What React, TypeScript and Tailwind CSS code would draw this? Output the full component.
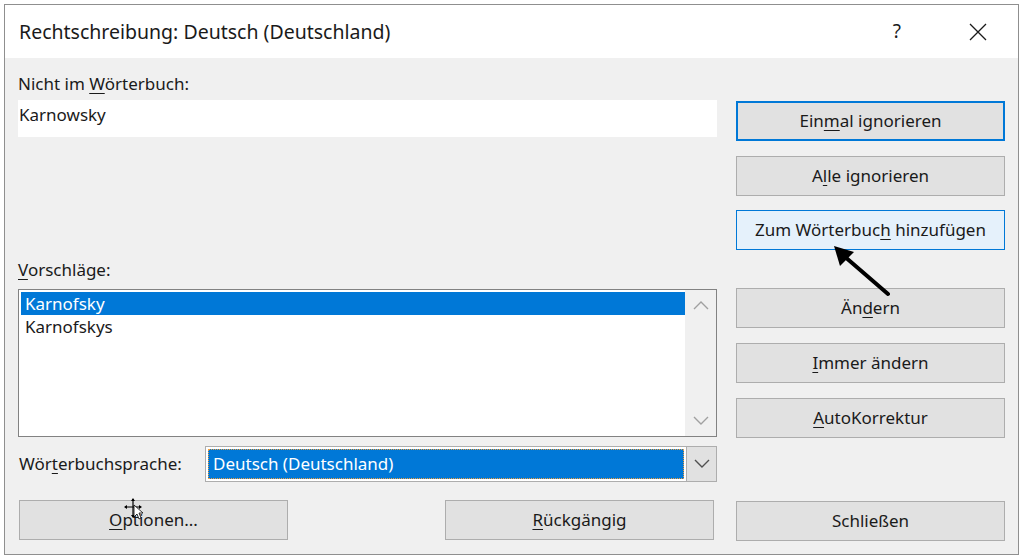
import React from "react";

const font = { fontFamily: '"Noto Sans", "Open Sans", Arial, sans-serif' };

function U({ children }: { children: React.ReactNode }) {
  return <span className="underline underline-offset-[3px] decoration-1">{children}</span>;
}

function Btn({
  children,
  variant = "normal",
}: {
  children: React.ReactNode;
  variant?: "normal" | "default" | "hover";
}) {
  const styles =
    variant === "default"
      ? "border-2 border-[#0078d7] bg-[#e1e1e1]"
      : variant === "hover"
        ? "border border-[#0078d7] bg-[#e5f1fb]"
        : "border border-[#adadad] bg-[#e1e1e1]";
  return (
    <div
      className={`flex h-[40px] w-full items-center justify-center text-[17px] text-[#1a1a1a] ${styles}`}
    >
      {children}
    </div>
  );
}

function Chevron({ up = false, color = "#a0a0a0" }: { up?: boolean; color?: string }) {
  return (
    <svg width="16" height="10" viewBox="0 0 16 10">
      <path
        d={up ? "M1 9 L8 2 L15 9" : "M1 1 L8 8 L15 1"}
        fill="none"
        stroke={color}
        strokeWidth="1.4"
      />
    </svg>
  );
}

export default function App() {
  return (
    <div className="relative h-[558px] w-[1024px] overflow-hidden bg-white" style={font}>
      <div className="ml-[4px] mt-[4px] flex h-[551px] w-[1015px] flex-col border border-[#8f8f8f]">
        {/* Title bar */}
        <div className="flex h-[53px] shrink-0 items-center bg-white pl-[14px] pr-[31px]">
          <span className="text-[19.5px] text-[#1a1a1a]">Rechtschreibung: Deutsch (Deutschland)</span>
          <span className="ml-auto mr-[68px] text-[19px] text-[#1a1a1a]">?</span>
          <svg width="18" height="18" viewBox="0 0 18 18">
            <path d="M1 1 L17 17 M17 1 L1 17" stroke="#1a1a1a" strokeWidth="1.3" />
          </svg>
        </div>

        {/* Body */}
        <div className="flex flex-1 flex-col bg-[#f0f0f0] px-[13px]">
          <div className="flex gap-[19px]">
            {/* Left column */}
            <div className="flex w-[699px] flex-col">
              <div className="mt-[16px] h-[20px] text-[17px] leading-[20px] text-[#1a1a1a]">
                Nicht im <U>W</U>örterbuch:
              </div>
              <div className="mt-[6px] flex h-[37px] items-start bg-white pl-[1px] pt-[2px] text-[17px] text-[#1a1a1a]">
                Karnowsky
              </div>
              <div className="mt-[123px] h-[20px] text-[17px] leading-[20px] text-[#1a1a1a]">
                <U>V</U>orschläge:
              </div>
              <div className="mt-[9px] flex h-[148px] border border-[#828282] bg-white">
                <div className="flex flex-1 flex-col pl-[2px] pt-[2px] text-[17px]">
                  <div className="flex h-[23px] items-center bg-[#0078d7] pl-[4px] text-white">
                    Karnofsky
                  </div>
                  <div className="flex h-[24px] items-center pl-[4px] text-[#1a1a1a]">Karnofskys</div>
                </div>
                <div className="flex w-[31px] flex-col items-center justify-between bg-[#f0f0f0] py-[10px]">
                  <Chevron up />
                  <Chevron />
                </div>
              </div>
              <div className="mt-[9px] flex h-[36px] items-center">
                <div className="w-[187px] pl-[1px] text-[17px] text-[#1a1a1a]">
                  Wör<U>t</U>erbuchsprache:
                </div>
                <div className="flex h-[36px] flex-1 border border-[#adadad] bg-white">
                  <div className="flex flex-1 p-[2px]">
                    <div className="flex flex-1 items-center border border-dotted border-[#f0a040] bg-[#0078d7] pl-[4px] text-[17px] text-white">
                      Deutsch (Deutschland)
                    </div>
                  </div>
                  <div className="flex w-[30px] items-center justify-center border-l border-[#adadad] bg-[#e1e1e1]">
                    <Chevron color="#505050" />
                  </div>
                </div>
              </div>
            </div>

            {/* Right column */}
            <div className="mt-[43px] flex w-[269px] flex-col">
              <Btn variant="default">
                <span>
                  Ein<U>m</U>al ignorieren
                </span>
              </Btn>
              <div className="mt-[15px]">
                <Btn>
                  <span>
                    A<U>l</U>le ignorieren
                  </span>
                </Btn>
              </div>
              <div className="mt-[14px]">
                <Btn variant="hover">
                  <span>
                    Zum Wörterbuc<U>h</U> hinzufügen
                  </span>
                </Btn>
              </div>
              <div className="mt-[38px]">
                <Btn>
                  <span>
                    Än<U>d</U>ern
                  </span>
                </Btn>
              </div>
              <div className="mt-[15px]">
                <Btn>
                  <span>
                    <U>I</U>mmer ändern
                  </span>
                </Btn>
              </div>
              <div className="mt-[15px]">
                <Btn>
                  <span>
                    <U>A</U>utoKorrektur
                  </span>
                </Btn>
              </div>
            </div>
          </div>

          {/* Bottom row */}
          <div className="mt-[17px] flex items-center">
            <div className="ml-[1px] w-[269px]">
              <Btn>
                <span>
                  <U>O</U>ptionen...
                </span>
              </Btn>
            </div>
            <div className="ml-[157px] w-[269px]">
              <Btn>
                <span>
                  <U>R</U>ückgängig
                </span>
              </Btn>
            </div>
            <div className="ml-[22px] mt-[2px] w-[269px]">
              <Btn>
                <span>Schließen</span>
              </Btn>
            </div>
          </div>
        </div>
      </div>

      {/* Annotation arrow */}
      <svg className="pointer-events-none absolute left-[826px] top-[240px]" width="70" height="60" viewBox="0 0 70 60">
        <path d="M62 54 L18 16" stroke="#000" strokeWidth="4" strokeLinecap="round" />
        <path d="M8 6 L28 12 L14 26 Z" fill="#000" />
      </svg>

      {/* Move cursor */}
      <svg className="pointer-events-none absolute left-[122px] top-[497px]" width="24" height="26" viewBox="0 0 24 26">
        <path d="M11 2 L11 20 M3 10 L19 10" stroke="#000" strokeWidth="1.2" />
        <path d="M11 1 L9 4 L13 4 Z M11 21 L9 18 L13 18 Z M2 10 L5 8 L5 12 Z M20 10 L17 8 L17 12 Z" fill="#000" />
        <path d="M12 8 L12 20 L15 17 L17 22 L19 21 L17 16 L21 16 Z" fill="#fff" stroke="#000" strokeWidth="0.8" />
      </svg>
    </div>
  );
}
